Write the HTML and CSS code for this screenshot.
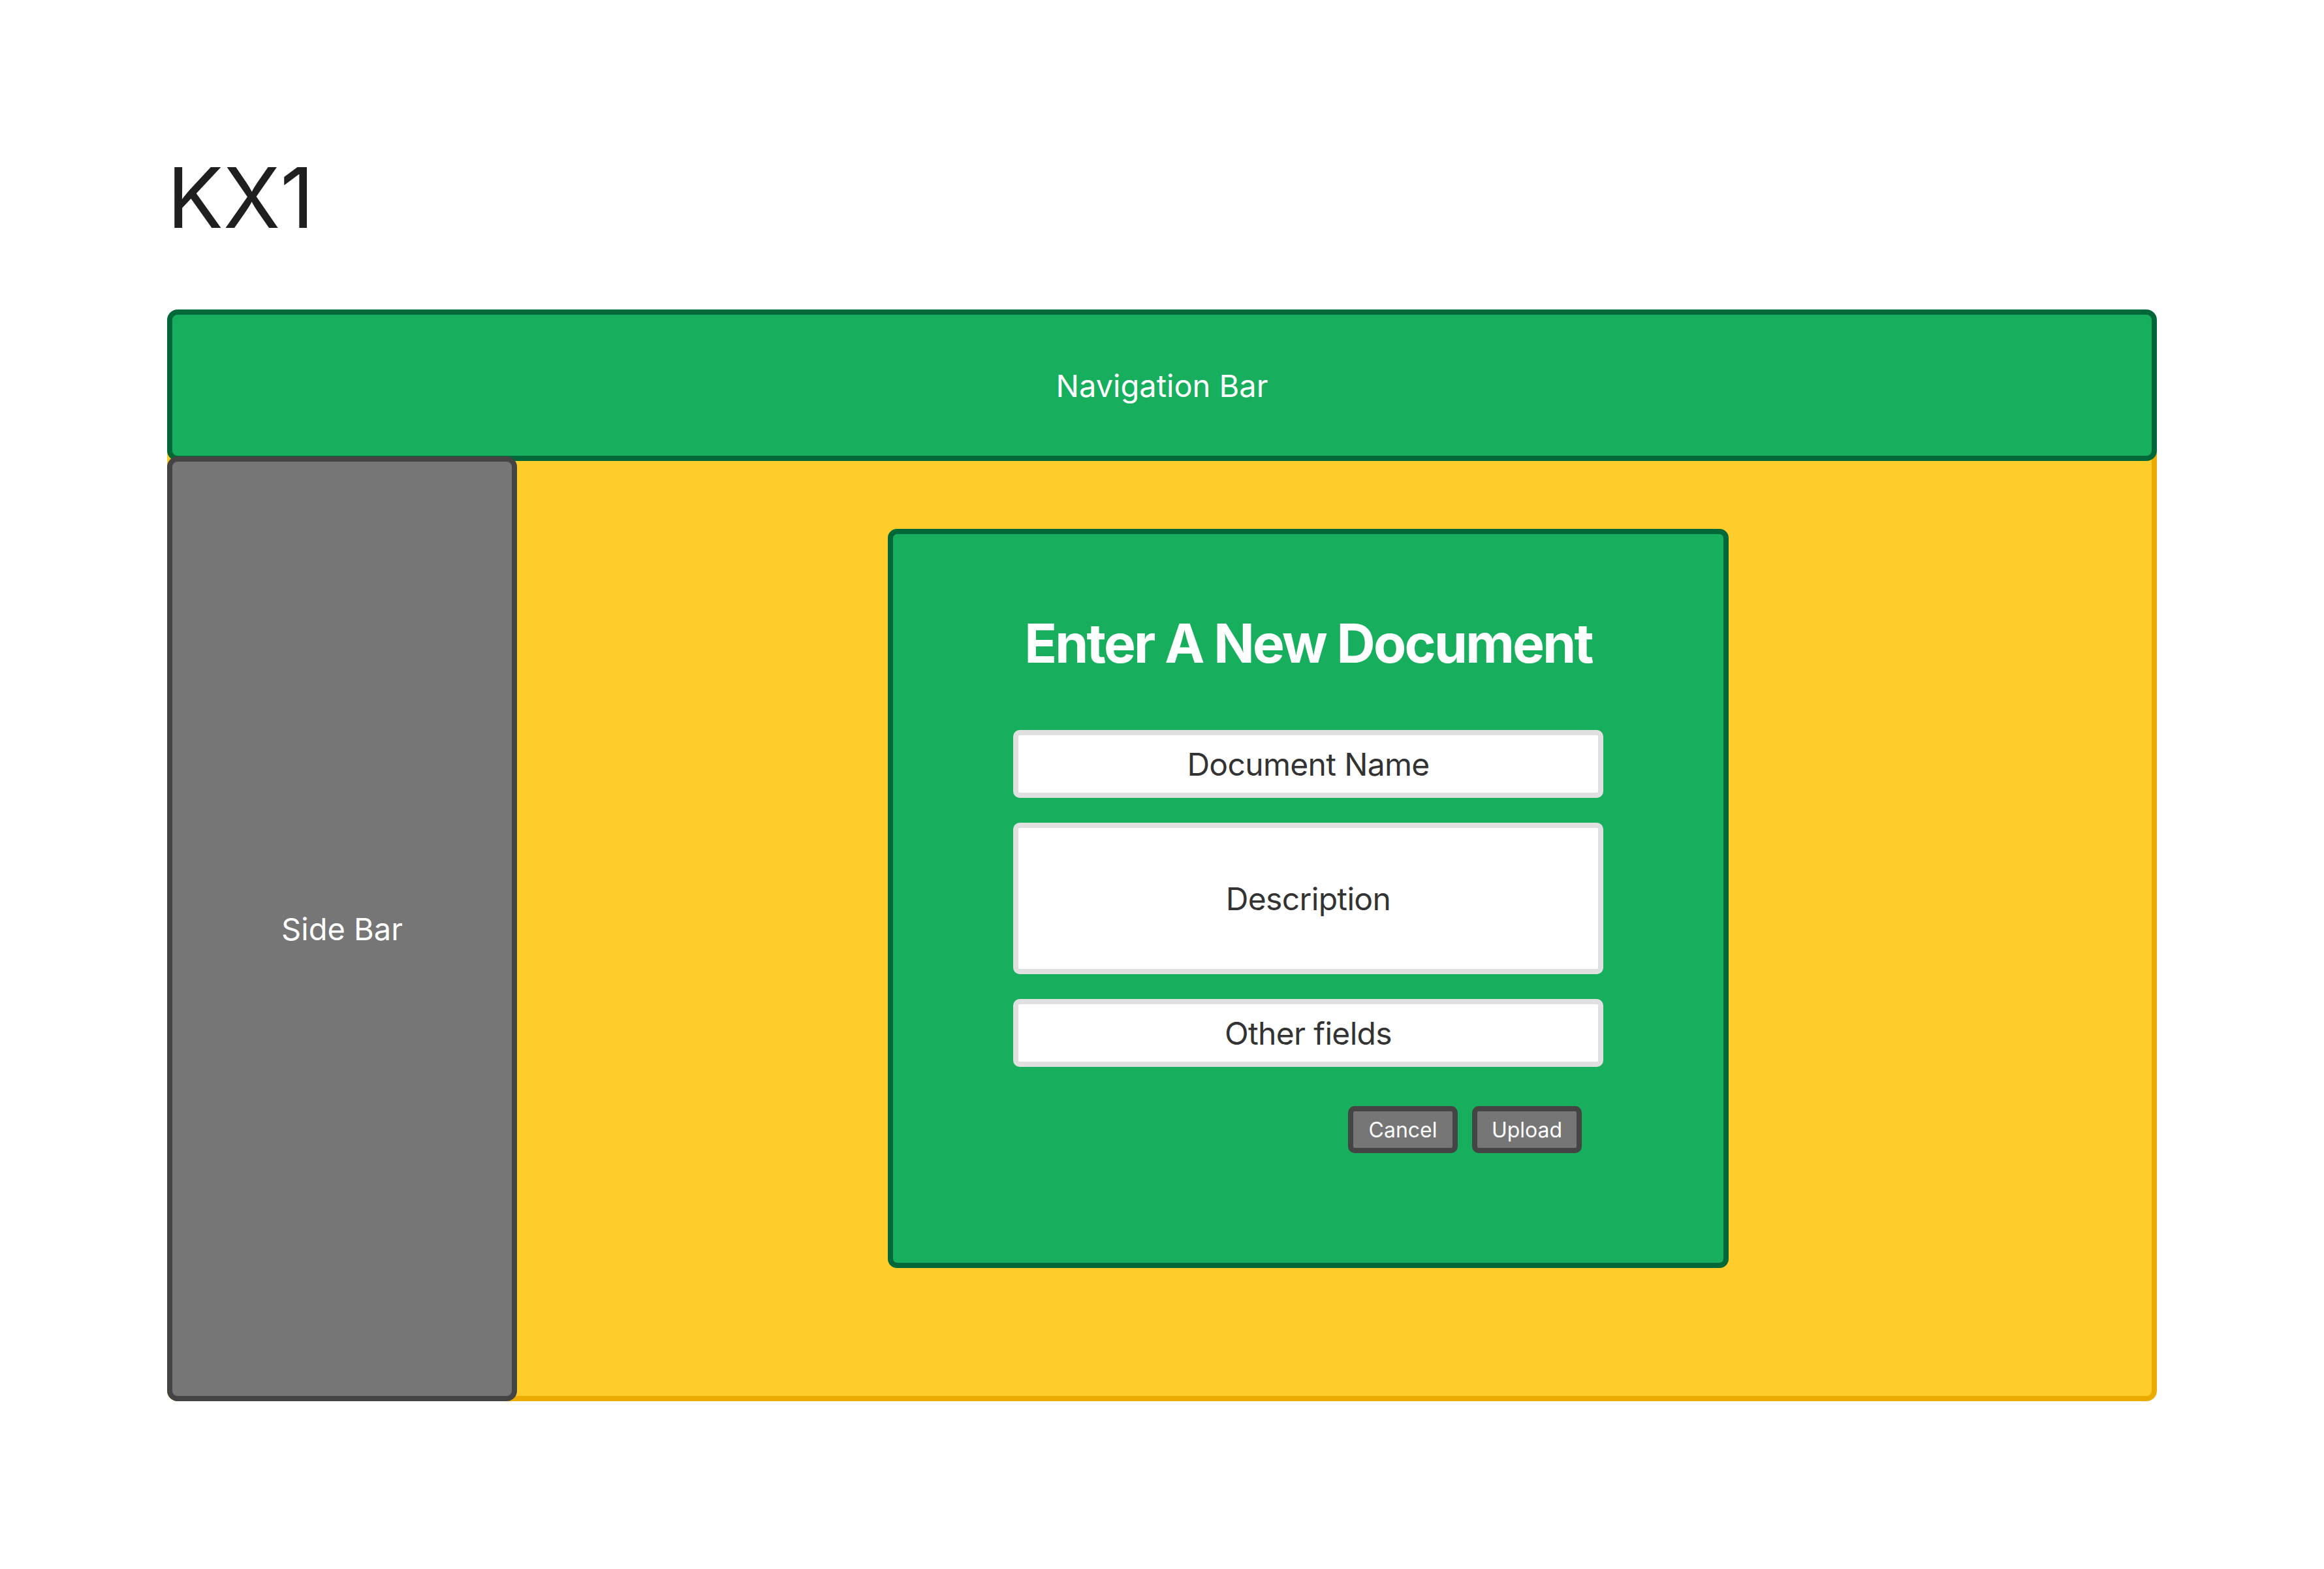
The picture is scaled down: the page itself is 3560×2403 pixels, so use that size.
FILE: index.html
```html
<!DOCTYPE html>
<html lang="en">
<head>
<meta charset="utf-8">
<title>KX1</title>
<link rel="stylesheet" href="styles.css">
</head>
<body>
<div class="page">
  <h1 class="title">KX1</h1>
  <div class="frame">
    <header class="nav">Navigation Bar</header>
    <div class="body-row">
      <aside class="sidebar">Side Bar</aside>
      <main class="main">
        <section class="dialog">
          <h2 class="dialog-title">Enter A New Document</h2>
          <div class="fields">
            <div class="field field-short">Document Name</div>
            <div class="field field-tall">Description</div>
            <div class="field field-short">Other fields</div>
          </div>
          <div class="actions">
            <button class="btn">Cancel</button>
            <button class="btn">Upload</button>
          </div>
        </section>
      </main>
    </div>
  </div>
</div>
</body>
</html>
```

FILE: styles.css
```css
* { box-sizing: border-box; }

html, body {
  margin: 0;
  padding: 0;
  background: #ffffff;
  font-family: Inter, "Noto Sans", "Liberation Sans", sans-serif;
}

.page {
  padding: 239px 256px 0 256px;
}

.title {
  margin: 0 0 107px 0;
  font-size: 128px;
  font-weight: 400;
  line-height: 1;
  color: #1f1f1f;
}

.frame {
  display: flex;
  flex-direction: column;
}

.nav {
  position: relative;
  z-index: 1;
  height: 232px;
  display: flex;
  align-items: center;
  justify-content: center;
  background: #17af5e;
  border: 8px solid #006838;
  border-radius: 16px;
  color: #ffffff;
  font-size: 47px;
}

.body-row {
  display: flex;
  align-items: stretch;
  margin-top: -40px;
  padding-top: 33px;
  height: 1480px;
  background: #fecd2c;
  border-right: 8px solid #ebab00;
  border-bottom: 8px solid #ebab00;
  border-radius: 0 0 16px 16px;
}

.sidebar {
  position: relative;
  z-index: 2;
  width: 536px;
  flex: none;
  margin-bottom: -8px;
  display: flex;
  align-items: center;
  justify-content: center;
  background: #767676;
  border: 8px solid #444444;
  border-radius: 16px;
  color: #ffffff;
  font-size: 47px;
}

.main {
  flex: 1;
  padding: 111px 0 0 568px;
}

.dialog {
  width: 1288px;
  height: 1132px;
  display: flex;
  flex-direction: column;
  align-items: center;
  background: #17af5e;
  border: 8px solid #006838;
  border-radius: 14px;
  padding-top: 127px;
}

.dialog-title {
  margin: 0 0 91px 0;
  font-size: 82px;
  font-weight: 700;
  line-height: 1;
  letter-spacing: -0.034em;
  color: #ffffff;
}

.fields {
  display: flex;
  flex-direction: column;
  gap: 38px;
  width: 904px;
}

.field {
  display: flex;
  align-items: center;
  justify-content: center;
  background: #ffffff;
  border: 8px solid #e0e0e0;
  border-radius: 10px;
  color: #333333;
  font-size: 48px;
  letter-spacing: -0.014em;
}

.field-short { height: 104px; }
.field-tall { height: 232px; }

.actions {
  width: 904px;
  display: flex;
  justify-content: flex-end;
  gap: 22px;
  margin-top: 60px;
  padding-right: 33px;
}

.btn {
  width: 168px;
  height: 72px;
  padding: 0;
  display: flex;
  align-items: center;
  justify-content: center;
  background: #767676;
  border: 8px solid #444444;
  border-radius: 10px;
  color: #ffffff;
  font-family: Inter, "Noto Sans", "Liberation Sans", sans-serif;
  font-size: 32px;
}
```
